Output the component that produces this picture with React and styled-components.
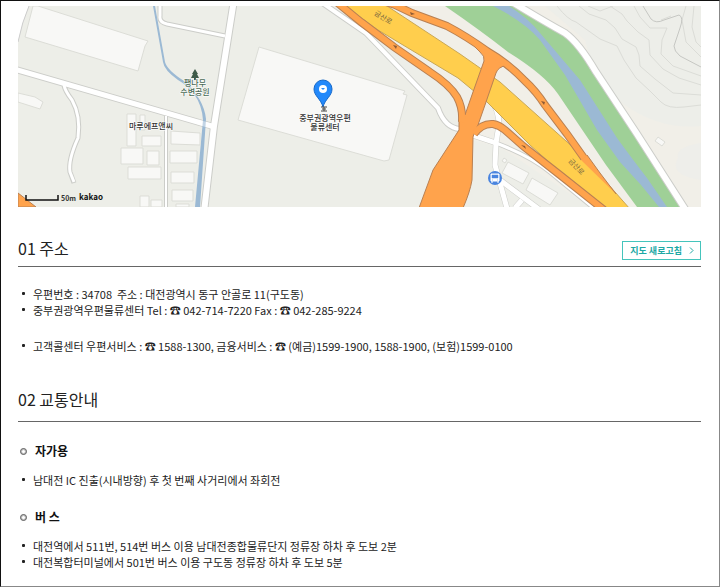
import React from "react";
import styled, { createGlobalStyle } from "styled-components";

const GlobalStyle = createGlobalStyle`
*, *::before { box-sizing: border-box; }
body {
  margin: 0;
  background: #fff;
  color: #222;
  font-family: "Noto Sans CJK KR", "Noto Sans", sans-serif;
}
`;

const ramps = [
  "M334 0 L361 22 L394 47 L430 72 Q450 85 457 97 Q463 108 462 122",
  "M380 0 L395 5 L412 13 L447 26 Q466 36 487 51 Q508 63 525 81 Q536 91 545 105 L567 134 L584 158",
  "M474 134 Q482 123 493 124 Q499 125 505 130 L523 146 L560 175 L604 210",
];

const rampEnd = "M581 160 L587 155 L600 173 L616 194 Z";

const trunk =
  "M472 41 L507 65 Q498 67 496 73 L486 102 L478 125 Q474 132 473 137 L472 180 Q470 192 463 208 H419 L433 170 L459 130 V113 L465 115 L473 92 L484 61 Q485 56 480 52 L474 46 Z";

const contours = [
  "M557 6 Q568 20 576 22 L600 39 L617 46 L624 60 L636 78 L650 91 L661 102 Q668 109 684 107 L701 105",
  "M579 6 L589 14 L606 20 L615 28 L622 39 L636 47 L639 55 L640 66 L655 79 L673 93 L701 95",
  "M588 6 L600 11 L613 6",
  "M610 6 L622 14 L627 21 L638 32 L649 40 L650 55 L663 69 L679 78 L701 85",
  "M634 6 L640 17 L650 28 L667 28 L662 40 L661 54 L673 66 L701 76",
  "M671 16 L661 20",
  "M686 6 L682 20 L686 42 L701 57",
  "M694 6 L692 27 L696 42 L701 47",
];

const whiteLanes = [
  "M490 99 Q499 109 499 125 L496 143 L495 165 L508 212",
  "M472 135 L496 143",
  "M500 180 L540 210",
  "M515 208 L522 200",
];

function MapView() {
  return (
    <MapSvg viewBox="18 6 683 201" preserveAspectRatio="xMidYMid slice" role="img" aria-label="중부권광역우편물류센터">
      <rect x="18" y="6" width="683" height="201" fill="#edeee8" />
      {/* river side */}
      <path d="M345 6 H701 V207 H472 L464 104 Z" fill="#f1efe8" />
      <path d="M545 6 L585 40 Q594 80 625 105 Q660 130 701 126 V6 Z" fill="#edeee9" />
      <path d="M701 143 Q675 147 678 158 Q668 175 701 180 Z" fill="#eeeeea" />
      <path d="M472 140 L500 147 L590 207 H463 Z" fill="#edeee8" />
      <g fill="none" stroke="#dbdcd7" strokeWidth="1">
        {contours.map((d) => <path key={d} d={d} />)}
      </g>
      <path d="M643 6 L651 19 Q656 24 664 20 L679 15 Q684 17 680 28 L674 46 Q674 51 680 56 L701 67" fill="none" stroke="#c6c7c3" />

      {/* white roads */}
      <path d="M18 6 H29 Q22 22 18 42 Z" fill="#fff" />
      <path d="M29 6 Q22 22 18 42" fill="none" stroke="#ccc" strokeWidth="1" />
      <g fill="none" strokeLinejoin="round">
        <g stroke="#cccdc9">
          <path d="M160 2 V16 Q159 22 167 24 L225 36" strokeWidth="5" />
          <path d="M64 85 Q65 91 72 100 Q81 116 78 138 Q68 160 70 172 L74 183" strokeWidth="5" />
          <path d="M166 116 V210" strokeWidth="4" />
          <path d="M234 0 L214 126 L204 212" strokeWidth="8" />
          <path d="M14 69 L215 127" strokeWidth="7" />
          <path d="M318 0 L366 33 L438 108 Q445 128 460 129" strokeWidth="6" />
          <path d="M496 143 Q530 156 550 172 L595 209" strokeWidth="5" />
          {whiteLanes.map((d) => <path key={d} d={d} strokeWidth="6" />)}
        </g>
        <g stroke="#fff">
          <path d="M160 2 V16 Q159 22 167 24 L225 36" strokeWidth="3" />
          <path d="M64 85 Q65 91 72 100 Q81 116 78 138 Q68 160 70 172 L74 182" strokeWidth="3" />
          <path d="M166 116 V210" strokeWidth="2" />
          <path d="M14 69 L215 127" strokeWidth="5" />
          <path d="M318 0 L366 33 L438 108 Q445 128 460 129" strokeWidth="4" />
          <path d="M496 143 Q530 156 550 172 L595 209" strokeWidth="3" />
          {whiteLanes.map((d) => <path key={d} d={d} strokeWidth="5" />)}
        </g>
      </g>
      <path d="M153 6 H155 L165 62 Q167 70 184 81 Q204 99 206 119 L200 207 H195 L203 120 Q202 105 194 94 Q187 85 178 80 Q164 70 163 62 Z" fill="#9bb9d4" />
      <path d="M234 0 L214 126 L204 212" fill="none" stroke="#fff" strokeWidth="6" />
      <path d="M198 122 L214 127" stroke="#fff" strokeWidth="5" strokeOpacity="0.4" />

      {/* park and stream */}
      <path d="M445 6 H514 Q550 24 568 40 Q580 48 590 69 L640 137 L681 207 H637 L606 165 L558 94 Q545 75 508 52 Q480 30 445 6 Z" fill="#9fd097" />
      <path d="M493 6 H509 Q528 18 540 33 L580 80 L617 138 Q633 160 647 178 L667 207 H659 L641 185 L620 162 L597 130 L565 75 L540 40 Q525 22 493 6 Z" fill="#9bb9d4" />
      <path d="M512 2 Q545 22 565 33 Q579 43 596 72 L637 134 L687 212" fill="none" stroke="#cccdc9" strokeWidth="8" />
      <path d="M512 2 Q545 22 565 33 Q579 43 596 72 L637 134 L687 212" fill="none" stroke="#fff" strokeWidth="6" />

      {/* highway, then the ramps as a dark casing with the fill on top */}
      <path d="M342 4 H384 L460 54 L500 82 L585 158 L630 209 H601 L530 145 L487 102 L458 78 L378 30 Z" fill="#ffce4d" stroke="#c9a755" strokeWidth="1" />
      <g fill="none" stroke="#b98052" strokeWidth="8">
        {ramps.map((d) => <path key={d} d={d} />)}
      </g>
      <path d={rampEnd} fill="#ffa34c" />
      <path d="M587 155 L600 173 L616 194" fill="none" stroke="#b98052" />
      <path d={trunk} fill="#ffa34c" stroke="#b98052" strokeWidth="1" />
      <g fill="none" stroke="#ffa34c" strokeWidth="6">
        {ramps.map((d) => <path key={d} d={d} />)}
      </g>
      <path d="M393 45 L396 49 L397 46 Z M410 12 L415 14 L411 15 Z M541 101 L544 105 L545 102 Z M521 145 L526 149 L525 146 Z" fill="#8f5b35" />
      <path d="M18 193 L36 207 H18 Z" fill="#ffa34c" stroke="#b98052" />

      {/* buildings */}
      <g fill="#f8f8f6" stroke="#dcddd7" strokeWidth="1">
        <path d="M33 6 H38 L148 41 L145 46 L138 71 L25 37 Z" />
        <path d="M18 93 L35 97 L43 102 L40 109 L18 102 Z" />
        <path d="M259 47 L405 91 L403 94 L407 95 L389 160 L384 161 L238 120 Z" />
        <path d="M127 114 h9 v32 h-9 Z M140 115 h5 v15 h-5 Z M142 136 h19 v10 h-19 Z M121 148 h22 v16 h-22 Z M147 151 h12 v14 h-12 Z M128 167 h33 v12 h-33 Z" />
        <path d="M171 131 l29 2 v12 l-29 -1 Z M170 151 h27 v12 h-27 Z M171 172 h23 v11 h-23 Z M172 190 h21 v11 h-21 Z M140 196 h9 v11 h-9 Z M151 200 h11 v7 h-11 Z M176 204 h13 v3 h-13 Z" />
        <path d="M508 162 L529 173 L523 184 L502 173 Z M532 178 L558 193 L550 205 L526 190 Z M658 137 L665 142 L662 146 L655 141 Z M504 158 l3 2 l-2 3 l-3 -2 Z" />
      </g>

      <path d="M195 69 L192 74 H193 L191 78 H194 V80 H196 V78 H199 L197 74 H198 Z" fill="#3f5b49" />
      <MapLabel $color="#4a6a55">
        <tspan x="195" y="86">팽나무</tspan>
        <tspan x="195" y="95">수변공원</tspan>
      </MapLabel>
      <MapLabel x="151" y="129">마루에프앤씨</MapLabel>
      <RoadLabel transform="translate(383 18) rotate(32)">금산로</RoadLabel>
      <RoadLabel transform="translate(576 167) rotate(46)">금산로</RoadLabel>

      <path d="M323 107 C321 99 314 96 314 89 A9 9 0 0 1 332 89 C332 96 325 99 323 107 Z" fill="#2389fa" stroke="#1668c8" strokeWidth="1" />
      <circle cx="323" cy="89" r="4" fill="#fff" />
      <path d="M321 88 H325 L323 90 Z" fill="#2389fa" />
      <path d="M321 107 H327 M322 109 H326 M321 111 H327 M324 107 V111" stroke="#444" strokeWidth="1" />
      <MapLabel>
        <tspan x="325" y="121">중부권광역우편</tspan>
        <tspan x="325" y="130">물류센터</tspan>
      </MapLabel>

      <circle cx="495" cy="178" r="7" fill="#4984df" />
      <path d="M491 174 H499 V181 H491 Z M492 181 V183 M498 181 V183" fill="#fff" stroke="#fff" />
      <path d="M492 175 H498 V178 H492 Z M492 180 H493 M497 180 H498" fill="#4984df" stroke="#4984df" strokeWidth="0.5" />

      <path d="M26 195 V200 H58 V195" fill="none" stroke="#111" strokeWidth="1.5" />
      <ScaleText x="61" y="201">50m</ScaleText>
      <BrandText x="79" y="200">kakao</BrandText>
    </MapSvg>
  );
}

function App() {
  return (
    <Page>
      <GlobalStyle />
      <MapView />
      <section>
        <Header>
          <Title>01 주소</Title>
          <RefreshButton type="button">
            지도 새로고침
            <svg width="5" height="7" viewBox="0 0 5 7" fill="none" stroke="currentColor" aria-hidden="true">
              <path d="M1 0.5 L4 3.5 L1 6.5" />
            </svg>
          </RefreshButton>
        </Header>
        <List $top={19}>
          <Item>우편번호 : 34708&nbsp; 주소 : 대전광역시 동구 안골로 11(구도동)</Item>
          <Item>중부권광역우편물류센터 Tel : ☎ 042-714-7220 Fax : ☎ 042-285-9224</Item>
        </List>
        <List $top={20}>
          <Item>고객콜센터 우편서비스 : ☎ 1588-1300, 금융서비스 : ☎ (예금)1599-1900, 1588-1900, (보험)1599-0100</Item>
        </List>
      </section>
      <section>
        <Header $roomy>
          <Title>02 교통안내</Title>
        </Header>
        <SubTitle>자가용</SubTitle>
        <List>
          <Item>남대전 IC 진출(시내방향) 후 첫 번째 사거리에서 좌회전</Item>
        </List>
        <SubTitle>버 스</SubTitle>
        <List>
          <Item>대전역에서 511번, 514번 버스 이용 남대전종합물류단지 정류장 하차 후 도보 2분</Item>
          <Item>대전복합터미널에서 501번 버스 이용 구도동 정류장 하차 후 도보 5분</Item>
        </List>
      </section>
    </Page>
  );
}

const Page = styled.main`
min-height: 100vh;
padding: 5px 18px 16px 17px;
border: 1px solid #888;
border-top-color: #111;
border-left-color: #111;
`;

const MapSvg = styled.svg`
display: block;
width: 100%;
height: 201px;
`;

const MapLabel = styled.text`
font-size: 8px;
font-weight: 500;
text-anchor: middle;
fill: ${({ $color }) => $color || "#333"};
stroke: #fff;
stroke-width: 1px;
paint-order: stroke;
`;

const RoadLabel = styled.text`
font-size: 7px;
text-anchor: middle;
dominant-baseline: middle;
fill: #7b6840;
`;

const ScaleText = styled.text`
font-size: 7px;
font-weight: bold;
fill: #333;
`;

const BrandText = styled.text`
font-size: 8px;
font-weight: bold;
fill: #111;
`;

const Header = styled.header`
display: flex;
align-items: flex-end;
justify-content: space-between;
margin-top: ${({ $roomy }) => ($roomy ? "33px" : "29px")};
padding-bottom: ${({ $roomy }) => ($roomy ? "10px" : "6px")};
border-bottom: 1px solid #666;
`;

const Title = styled.h2`
margin: 0;
font-size: 16px;
font-weight: 400;
line-height: 24px;
`;

const RefreshButton = styled.button`
display: flex;
align-items: center;
gap: 7px;
height: 19px;
padding: 0 6px 0 7px;
border: 1px solid #45c4bc;
background: #fff;
color: #20a8a4;
font-family: inherit;
font-size: 9px;
font-weight: bold;
cursor: pointer;
`;

const SubTitle = styled.h3`
display: flex;
align-items: center;
gap: 8px;
margin: 19px 0 0 2px;
font-size: 12px;
font-weight: bold;
line-height: 20px;
color: #111;

&::before {
  content: "";
  width: 7px;
  height: 7px;
  border: 1px solid #555;
  border-radius: 50%;
  box-shadow: inset 0 0 0 1px #bbb;
}
`;

const List = styled.ul`
margin: ${({ $top }) => $top || 11}px 0 0;
padding: 0;
list-style: none;
`;

const Item = styled.li`
display: flex;
align-items: center;
gap: 8px;
padding-left: 4px;
font-size: 11px;
line-height: 16px;

&::before {
  content: "";
  flex: none;
  width: 3px;
  height: 3px;
  margin-bottom: 2px;
  border-radius: 1px;
  background: #222;
}
`;

export default App;
